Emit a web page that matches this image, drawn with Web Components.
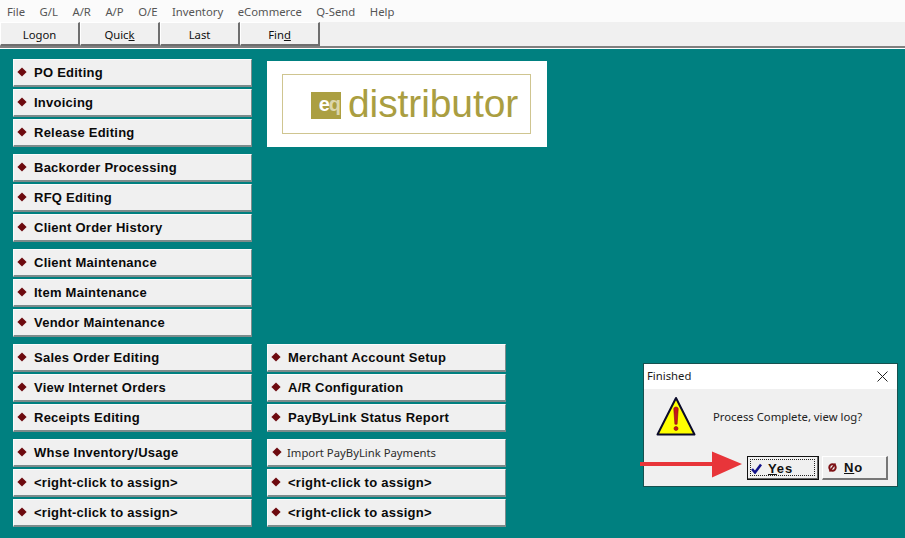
<!DOCTYPE html>
<html>
<head>
<meta charset="utf-8">
<title>eq distributor</title>
<style>
  html, body { margin: 0; height: 100%; }
  body { width: 905px; height: 538px; overflow: hidden; position: relative; background: #008080; font-family: "Liberation Sans", Arial, sans-serif; }
  main { display: flex; gap: 15px; padding: 10px 13px 0; }
  .col { display: flex; flex-direction: column; gap: 7px; width: 239px; }
</style>
</head>
<body>
<template id="menubar-tpl">
  <style>
    :host { display: flex; box-sizing: border-box; height: 22px; padding: 1px 0 0 7px; background: #fbfbfb; gap: 14.5px; align-items: center; font: 11.3px "Noto Sans", "Open Sans", sans-serif; color: #555; }
    ::slotted(span) { display: block; }
  </style>
  <slot></slot>
</template>

<template id="toolbar-tpl">
  <style>
    :host { display: flex; height: 24px; background: #f0f0f0; border-bottom: 2px solid #808080; box-shadow: 0 1px 0 #fff; margin-bottom: 1px; }
  </style>
  <slot></slot>
</template>

<template id="toolbtn-tpl">
  <style>
    :host { display: flex; box-sizing: border-box; width: 80px; height: 24px; padding-top: 1px; align-items: center; justify-content: center; background: #f0f0f0; border-left: 1px solid #fff; border-top: 1px solid #fff; border-right: 2px solid #6e6e6e; border-bottom: 2px solid #6e6e6e; font: 11.3px "Noto Sans", "Open Sans", sans-serif; color: #111; }
  </style>
  <slot></slot>
</template>

<template id="group-tpl">
  <style>
    :host { display: flex; flex-direction: column; gap: 2px; }
  </style>
  <slot></slot>
</template>

<template id="menubtn-tpl">
  <style>
    :host { display: flex; box-sizing: border-box; height: 28px; align-items: center; gap: 7px; padding: 0 0 0 3px; background: #f0f0f0; border-top: 1px solid #fbfbfb; border-left: 1px solid #fbfbfb; border-right: 1px solid #7d8c8c; border-bottom: 2px solid #7d8c8c; font: bold 13px "Liberation Sans", Arial, sans-serif; letter-spacing: .25px; color: #0a0a0a; white-space: nowrap; }
    :host([plain]) { font: 11.3px "Noto Sans", "Open Sans", sans-serif; letter-spacing: 0; color: #2c2c2c; gap: 5px; padding-left: 4px; }
    svg { width: 10px; height: 10px; flex: none; margin-top: -2px; }
  </style>
  <svg viewBox="0 0 10 10"><path d="M5 .4 9.600 5 5 9.600 .4 5z" fill="#6d0a0f"/></svg>
  <slot></slot>
</template>

<template id="logo-tpl">
  <style>
    :host { display: flex; box-sizing: border-box; width: 280px; height: 86px; margin: 2px 0 190px; padding: 13px 16px 13px 15px; background: #fff; }
    .frame { flex: 1; display: flex; align-items: center; gap: 7px; padding-left: 28px; border: 1px solid #cfc590; }
    .mark { box-sizing: border-box; width: 30px; height: 27px; margin-top: 3px; padding: 0 1px 2px 0; background: #ab9f42; color: #fff; font: bold 20px "Liberation Sans", Arial, sans-serif; letter-spacing: -1px; display: flex; align-items: center; justify-content: flex-end; }
    .mark span { color: #dcd6ad; }
    .word { font: 39px "Liberation Sans", Arial, sans-serif; letter-spacing: -.1px; color: #aa9e41; line-height: 1; padding-bottom: 1px; }
  </style>
  <div class="frame"><span class="mark">e<span>q</span></span><span class="word">distributor</span></div>
</template>

<template id="dialog-tpl">
  <style>
    :host { position: absolute; left: 643px; top: 363px; width: 255px; height: 124px; box-sizing: border-box; border: 1px solid #16514f; background: #f0f0f0; font: 11.3px "Noto Sans", "Open Sans", sans-serif; color: #222; display: flex; flex-direction: column; }
    .title { box-sizing: border-box; height: 25px; flex: none; background: #fff; display: flex; align-items: center; justify-content: space-between; padding: 0 9px 2px 3px; color: #1a1a1a; }
    .title svg { width: 11px; height: 11px; margin-top: 2px; }
    .body { display: flex; align-items: center; gap: 17px; padding: 7px 0 0 12px; height: 40px; }
    .body svg { width: 40px; height: 41px; flex: none; }
    .btns { display: flex; gap: 3px; padding: 20px 0 0 103px; }
  </style>
  <div class="title"><span>Finished</span><svg viewBox="0 0 11 11"><path d="M.5.5l10 10M10.500.5l-10 10" stroke="#222" fill="none"/></svg></div>
  <div class="body">
    <svg viewBox="0 0 40 41"><path d="M20 2 38.500 38.500H1.500z" fill="#ffff00" stroke="#0b0b2a" stroke-width="2" stroke-linejoin="round"/><path d="M20 11c-1.600 0-2.300 1-2.200 2.200l1.100 15h2.200l1.100-15c.1-1.200-.6-2.200-2.200-2.200z" fill="#c8141c" stroke="#7a0e12" stroke-width=".6"/><circle cx="20" cy="32.500" r="2" fill="#c8141c" stroke="#7a0e12" stroke-width=".6"/></svg>
    <span>Process Complete, view log?</span>
  </div>
  <div class="btns"><slot></slot></div>
</template>

<template id="dlgbtn-tpl">
  <style>
    :host { display: flex; box-sizing: border-box; width: 66px; height: 24px; align-items: center; padding-left: 4px; background: #f0f0f0; border-top: 1px solid #fff; border-left: 1px solid #fff; border-right: 2px solid #777; border-bottom: 2px solid #777; font: bold 13px "Liberation Sans", Arial, sans-serif; letter-spacing: .9px; color: #111; position: relative; }
    :host([primary]) { width: 72px; border: 1px solid #111; box-shadow: inset -1px -1px 0 #666; padding-left: 3px; }
    :host([primary])::after { content: ""; position: absolute; inset: 2px 3px 3px 2px; border: 1px dotted #222; }
    ::slotted(svg) { width: 11px; height: 11px; flex: none; margin-right: 6px; }
  </style>
  <slot name="icon"></slot>
  <slot></slot>
</template>

<app-menubar><span>File</span><span>G/L</span><span>A/R</span><span>A/P</span><span>O/E</span><span>Inventory</span><span>eCommerce</span><span>Q-Send</span><span>Help</span></app-menubar>
<app-toolbar>
  <tool-button>Logon</tool-button>
  <tool-button><span>Quic<u>k</u></span></tool-button>
  <tool-button>Last</tool-button>
  <tool-button><span>Fin<u>d</u></span></tool-button>
</app-toolbar>

<main>
  <div class="col">
    <menu-group><menu-button>PO Editing</menu-button><menu-button>Invoicing</menu-button><menu-button>Release Editing</menu-button></menu-group>
    <menu-group><menu-button>Backorder Processing</menu-button><menu-button>RFQ Editing</menu-button><menu-button>Client Order History</menu-button></menu-group>
    <menu-group><menu-button>Client Maintenance</menu-button><menu-button>Item Maintenance</menu-button><menu-button>Vendor Maintenance</menu-button></menu-group>
    <menu-group><menu-button>Sales Order Editing</menu-button><menu-button>View Internet Orders</menu-button><menu-button>Receipts Editing</menu-button></menu-group>
    <menu-group><menu-button>Whse Inventory/Usage</menu-button><menu-button>&lt;right-click to assign&gt;</menu-button><menu-button>&lt;right-click to assign&gt;</menu-button></menu-group>
  </div>
  <div class="col">
    <eq-logo></eq-logo>
    <menu-group><menu-button>Merchant Account Setup</menu-button><menu-button>A/R Configuration</menu-button><menu-button>PayByLink Status Report</menu-button></menu-group>
    <menu-group><menu-button plain>Import PayByLink Payments</menu-button><menu-button>&lt;right-click to assign&gt;</menu-button><menu-button>&lt;right-click to assign&gt;</menu-button></menu-group>
  </div>
</main>

<finish-dialog>
  <dialog-button primary><svg slot="icon" viewBox="0 0 11 11"><path d="M1 6l3 3.500L10 1.500" stroke="#12128a" stroke-width="2.500" fill="none"/></svg><span><u>Y</u>es</span></dialog-button>
  <dialog-button><svg slot="icon" viewBox="0 0 11 11"><circle cx="5.500" cy="5.500" r="3.200" stroke="#7d1216" stroke-width="2" fill="none"/><path d="M2.500 9.500 8.500 1.500" stroke="#7d1216" stroke-width="1.500"/></svg><span><u>N</u>o</span></dialog-button>
</finish-dialog>

<svg id="arrow" style="position:absolute;left:640px;top:450px;width:104px;height:30px" viewBox="0 0 104 30"><path d="M0 12H72V1.500L102 14 72 27.500V16H0z" fill="#e8353a"/></svg>

<script>
  // each element just clones its template into an open shadow root
  function register(tag, tplId) {
    customElements.define(tag, class extends HTMLElement {
      constructor() {
        super();
        this.attachShadow({ mode: 'open' });
        this.shadowRoot.appendChild(document.getElementById(tplId).content.cloneNode(true));
      }
    });
  }
  register('app-menubar', 'menubar-tpl');
  register('app-toolbar', 'toolbar-tpl');
  register('tool-button', 'toolbtn-tpl');
  register('menu-group', 'group-tpl');
  register('menu-button', 'menubtn-tpl');
  register('eq-logo', 'logo-tpl');
  register('finish-dialog', 'dialog-tpl');
  register('dialog-button', 'dlgbtn-tpl');
</script>
</body>
</html>
